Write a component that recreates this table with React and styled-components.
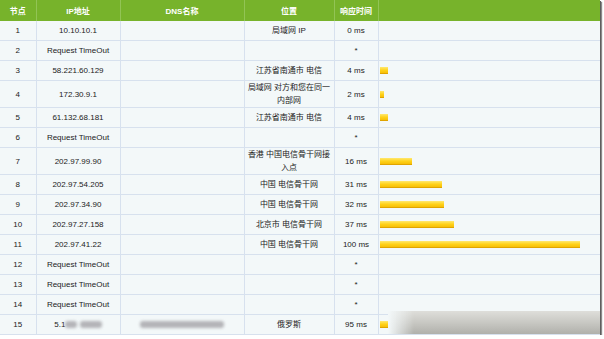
import React from "react"
import styled, { createGlobalStyle } from "styled-components"

const GlobalStyle = createGlobalStyle`
  html, body {
    margin: 0;
    padding: 0;
    background: #ffffff;
  }
`;

const Frame = styled.div`
  width: 600px;
  box-shadow: 1px 1px 0 #5e5e5e, 2px 2px 1px #8a8a8a;
  font-family: "Liberation Sans", "Noto Sans CJK SC", sans-serif;
  font-size: 8px;
  color: #222;
`;

const Table = styled.table`
  width: 600px;
  border-collapse: collapse;
  table-layout: fixed;
  background: #f3f8f9;
`;

const Head = styled.th`
  background: #77b32b;
  color: #fff;
  font-weight: bold;
  height: 21px;
  padding: 0;
  text-align: center;
  border-right: 1px solid #92c455;
  &:last-child { border-right: none; }
`;

const Cell = styled.td`
  height: 19px;
  padding: ${p => (p.$left ? "0 1px" : "0 2px")};
  line-height: 13px;
  text-align: ${p => (p.$left ? "left" : "center")};
  vertical-align: middle;
  border: 1px solid #d7e1ee;
  border-top: none;
  border-left: none;
  word-break: break-all;
  &:last-child { border-right: none; }
`;

const BarRow = styled.div`
  display: flex;
  align-items: center;
  height: 19px;
`;

const Bar = styled.div`
  flex: none;
  height: 7px;
  background: linear-gradient(#ffe870 0%, #ffd21a 45%, #f4b800 100%);
  box-shadow: inset 0 -1px 0 #e0a400;
`;

/* the blurred-out stretch of the last row */
const Blurred = styled.div`
  flex: 1;
  align-self: stretch;
  margin: -4px -1px 0 0;
  background:
    linear-gradient(to right, #f3f8f9 0px, rgba(243, 248, 249, 0) 26px),
    linear-gradient(to bottom, #dededa 0%, #c8c8c3 50%, #b0b0ab 100%);
`;

const Smudge = styled.span`
  display: inline-block;
  vertical-align: middle;
  height: 7px;
  width: ${p => p.$w}px;
  background: #b4b4b8;
  border-radius: 3px;
  filter: blur(1.5px);
`;

const rows = [
  ["1", "10.10.10.1", "局域网 IP", 0],
  ["2", "Request TimeOut", "", null],
  ["3", "58.221.60.129", "江苏省南通市 电信", 4],
  ["4", "172.30.9.1", "局域网 对方和您在同一内部网", 2],
  ["5", "61.132.68.181", "江苏省南通市 电信", 4],
  ["6", "Request TimeOut", "", null],
  ["7", "202.97.99.90", "香港 中国电信骨干网接入点", 16],
  ["8", "202.97.54.205", "中国 电信骨干网", 31],
  ["9", "202.97.34.90", "中国 电信骨干网", 32],
  ["10", "202.97.27.158", "北京市 电信骨干网", 37],
  ["11", "202.97.41.22", "中国 电信骨干网", 100],
  ["12", "Request TimeOut", "", null],
  ["13", "Request TimeOut", "", null],
  ["14", "Request TimeOut", "", null],
];

const App = () => (
  <>
    <GlobalStyle />
    <Frame>
      <Table>
        <colgroup>
          <col style={{ width: 36 }} />
          <col style={{ width: 84 }} />
          <col style={{ width: 124 }} />
          <col style={{ width: 90 }} />
          <col style={{ width: 44 }} />
          <col />
        </colgroup>
        <thead>
          <tr>
            <Head>节点</Head>
            <Head>IP地址</Head>
            <Head>DNS名称</Head>
            <Head>位置</Head>
            <Head>响应时间</Head>
            <Head />
          </tr>
        </thead>
        <tbody>
          {rows.map(([n, ip, loc, ms]) => (
            <tr key={n}>
              <Cell>{n}</Cell>
              <Cell>{ip}</Cell>
              <Cell />
              <Cell>{loc}</Cell>
              <Cell>{ms === null ? "*" : `${ms} ms`}</Cell>
              <Cell $left>
                {ms > 0 && <Bar style={{ width: ms * 2 }} />}
              </Cell>
            </tr>
          ))}
          <tr>
            <Cell>15</Cell>
            <Cell>
              5.1<Smudge $w={12} /> <Smudge $w={22} />
            </Cell>
            <Cell>
              <Smudge $w={84} />
            </Cell>
            <Cell>俄罗斯</Cell>
            <Cell>95 ms</Cell>
            <Cell $left>
              <BarRow>
                <Bar style={{ width: 8 }} />
                <Blurred />
              </BarRow>
            </Cell>
          </tr>
        </tbody>
      </Table>
    </Frame>
  </>
)

export default App
